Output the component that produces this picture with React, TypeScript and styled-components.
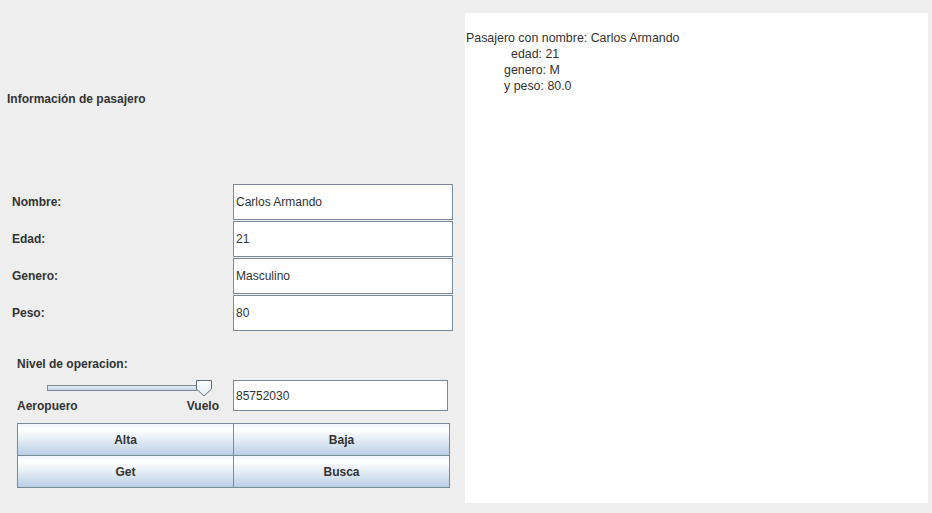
import styled, { createGlobalStyle } from 'styled-components'

const GlobalStyle = createGlobalStyle`
  html, body {
    margin: 0;
    padding: 0;
    background: #eeeeee;
  }
  body {
    font-family: 'Liberation Sans', Arial, sans-serif;
    font-size: 12px;
    color: #333333;
  }
`

const fields = [
  { label: 'Nombre:', value: 'Carlos Armando' },
  { label: 'Edad:', value: '21' },
  { label: 'Genero:', value: 'Masculino' },
  { label: 'Peso:', value: '80' },
]

const output = [
  { indent: 1, text: 'Pasajero con nombre: Carlos Armando' },
  { indent: 46, text: 'edad: 21' },
  { indent: 39, text: 'genero: M' },
  { indent: 39, text: 'y peso: 80.0' },
]

export default function App() {
  return (
    <>
      <GlobalStyle />
      <Window>
        <LeftPanel>
          <Title>Información de pasajero</Title>
          <Form>
            {fields.map((f) => (
              <FormRow key={f.label}>
                <Label>{f.label}</Label>
                <TextField>{f.value}</TextField>
              </FormRow>
            ))}
          </Form>
          <Operation>
            <Label>Nivel de operacion:</Label>
            <SliderRow>
              <SliderBox>
                <Track>
                  <Thumb width="16" height="17" viewBox="0 0 16 17">
                    <defs>
                      <linearGradient id="thumbFill" x1="0" y1="0" x2="0" y2="1">
                        <stop offset="0" stopColor="#ffffff" />
                        <stop offset="1" stopColor="#e3ebf4" />
                      </linearGradient>
                    </defs>
                    <path
                      d="M0.5 0.5 H15.5 V9 L8 16 L0.5 9 Z"
                      fill="url(#thumbFill)"
                      stroke="#5f6f80"
                    />
                  </Thumb>
                </Track>
                <SliderLabels>
                  <Label>Aeropuero</Label>
                  <Label>Vuelo</Label>
                </SliderLabels>
              </SliderBox>
              <FlightField>85752030</FlightField>
            </SliderRow>
            <Buttons>
              <Button>Alta</Button>
              <Button>Baja</Button>
              <Button>Get</Button>
              <Button>Busca</Button>
            </Buttons>
          </Operation>
        </LeftPanel>
        <OutputArea>
          {output.map((l) => (
            <Line key={l.text} $indent={l.indent}>
              {l.text}
            </Line>
          ))}
        </OutputArea>
      </Window>
    </>
  )
}

const Window = styled.div`
  display: flex;
  width: 932px;
  height: 513px;
  background: #eeeeee;
`

const LeftPanel = styled.div`
  width: 465px;
  display: flex;
  flex-direction: column;
`

const Title = styled.div`
  margin: 91px 0 0 7px;
  line-height: 16px;
  font-weight: bold;
`

const Form = styled.div`
  margin: 77px 0 0 12px;
  display: flex;
  flex-direction: column;
  gap: 1px;
`

const FormRow = styled.div`
  display: grid;
  grid-template-columns: 221px 220px;
  align-items: center;
`

const Label = styled.span`
  font-weight: bold;
  line-height: 16px;
`

const TextField = styled.div`
  height: 36px;
  box-sizing: border-box;
  border: 1px solid #7a8a99;
  background: #ffffff;
  padding-left: 2px;
  display: flex;
  align-items: center;
`

const Operation = styled.div`
  margin: 25px 0 0 17px;
  width: 432px;
  display: flex;
  flex-direction: column;
`

const SliderRow = styled.div`
  margin-top: 8px;
  display: flex;
  align-items: flex-start;
`

const SliderBox = styled.div`
  width: 202px;
  margin-right: 14px;
  display: flex;
  flex-direction: column;
`

const Track = styled.div`
  position: relative;
  margin: 5px 0 0 30px;
  width: 150px;
  height: 6px;
  box-sizing: border-box;
  border: 1px solid #7a8a99;
  background: linear-gradient(#e8eef6, #c3d4e8);
`

const Thumb = styled.svg`
  position: absolute;
  left: 148px;
  top: -6px;
  display: block;
`

const SliderLabels = styled.div`
  margin-top: 7px;
  display: flex;
  justify-content: space-between;
`

const FlightField = styled(TextField)`
  width: 215px;
  height: 31px;
`

const Buttons = styled.div`
  margin-top: 9px;
  display: grid;
  grid-template-columns: 216px 216px;
  grid-template-rows: 32px 32px;
`

const Button = styled.div`
  box-sizing: border-box;
  border: 1px solid #7a8a99;
  margin: 0 -1px -1px 0;
  background: linear-gradient(#f2f6fa 0%, #ffffff 18%, #e1eaf4 55%, #b9cfe5 100%);
  display: flex;
  align-items: center;
  justify-content: center;
  font-weight: bold;
`

const OutputArea = styled.div`
  flex: 1;
  margin: 13px 4px 10px 0;
  padding-top: 17px;
  background: #ffffff;
  font-size: 12.4px;
`

const Line = styled.div<{ $indent: number }>`
  line-height: 16px;
  padding-left: ${(p) => p.$indent}px;
`
